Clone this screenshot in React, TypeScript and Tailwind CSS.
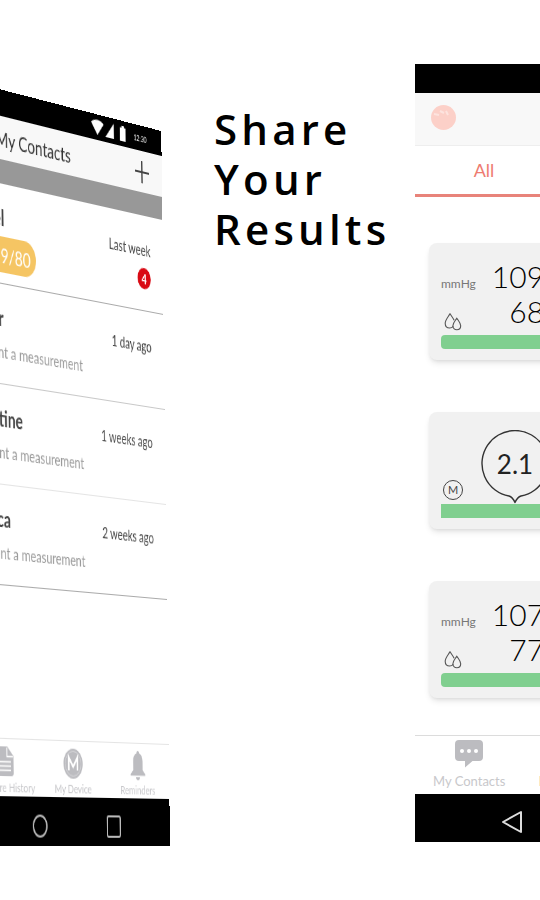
import type { ReactNode } from "react";
import clsx from "clsx";

interface Contact {
  name: string;
  time: string;
  reading?: string;
  unread?: number;
}

const contacts: Contact[] = [
  { name: "Daniel", time: "Last week", reading: "119/80", unread: 4 },
  { name: "Oliver", time: "1 day ago" },
  { name: "Christine", time: "1 weeks ago" },
  { name: "Jessica", time: "2 weeks ago" },
];

function ChatIcon() {
  return (
    <svg width="28" height="28" viewBox="0 0 28 28" fill="none">
      <path
        d="M4 0h20a4 4 0 0 1 4 4v13a4 4 0 0 1-4 4h-6.500l-7.500 6.500V21H4a4 4 0 0 1-4-4V4a4 4 0 0 1 4-4z"
        fill="#bcbcc0"
      />
      <circle cx="7" cy="11" r="2" fill="#fff" />
      <circle cx="14" cy="11" r="2" fill="#fff" />
      <circle cx="21" cy="11" r="2" fill="#fff" />
    </svg>
  );
}

function HistoryIcon({ color }: { color: string }) {
  return (
    <svg width="24" height="28" viewBox="0 0 24 28" fill="none">
      <path d="M3 0h12l9 9v16a3 3 0 0 1-3 3H3a3 3 0 0 1-3-3V3a3 3 0 0 1 3-3z" fill={color} />
      <path d="M14.500 1v8.500H23M4 14.500h16M4 18.500h16M4 22.500h16" stroke="#fff" strokeWidth="1.500" />
    </svg>
  );
}

function DeviceIcon() {
  return (
    <svg width="29" height="29" viewBox="0 0 29 29" fill="none">
      <circle cx="14.500" cy="14.500" r="14.500" fill="#bcbcc0" />
      <circle cx="14.500" cy="14.500" r="12" stroke="#d6d6d9" strokeWidth="1" />
      <path d="M8 21V8.500l6.500 9 6.500-9V21" stroke="#fff" strokeWidth="2.400" />
    </svg>
  );
}

function BellIcon() {
  return (
    <svg width="24" height="29" viewBox="0 0 24 29" fill="#bcbcc0">
      <path d="M12 0c1.200 0 2 1 2 2.200 3.600 1.100 5.500 4 5.500 8V19l4 4v1.500H.5V23l4-4v-8.800c0-4 1.900-6.900 5.500-8C10 1 10.800 0 12 0z" />
      <path d="M9 26h6a3 3 0 0 1-6 0z" />
    </svg>
  );
}

function DropsIcon() {
  return (
    <svg width="18" height="18" viewBox="0 0 18 18" fill="none" stroke="#555" strokeWidth="1.100">
      <path d="M9.200 13.200C8.400 14.400 7.300 15 5.700 15 3 15 1.200 13 1.200 10.200 1.200 7 3.700 4.500 6 .8c1.600 2.400 3.200 4.300 4.100 6.500" />
      <path d="M12.800 5.200c1.700 2.700 3.900 4.700 3.900 7.500 0 2.200-1.600 4-3.900 4s-3.900-1.800-3.900-4c0-2.800 2.200-4.800 3.900-7.500z" />
    </svg>
  );
}

interface NavTabProps {
  icon: ReactNode;
  label: string;
  active?: boolean;
}

function NavTab({ icon, label, active }: NavTabProps) {
  return (
    <button
      className={clsx(
        "flex flex-col items-center whitespace-nowrap",
        active ? "text-[#ee7b70]" : "text-[#c8c8cb]"
      )}
    >
      <span className="flex h-[30px] items-center">{icon}</span>
      {label}
    </button>
  );
}

function SystemBar({ className }: { className: string }) {
  return (
    <div className={clsx("flex items-center justify-between bg-black pt-2", className)}>
      <button aria-label="Back">
        <svg width="22" height="24" viewBox="0 0 22 24" fill="none" stroke="#ddd" strokeWidth="2">
          <path d="M20 2v20L2 12z" strokeLinejoin="round" />
        </svg>
      </button>
      <button aria-label="Home">
        <svg width="22" height="22" viewBox="0 0 22 22" fill="none" stroke="#bbb" strokeWidth="2">
          <circle cx="11" cy="11" r="10" />
        </svg>
      </button>
      <button aria-label="Recent apps">
        <svg width="22" height="22" viewBox="0 0 22 22" fill="none" stroke="#bbb" strokeWidth="2">
          <rect x="1" y="1" width="20" height="20" rx="2" />
        </svg>
      </button>
    </div>
  );
}

function ContactRow({ name, time, reading, unread }: Contact) {
  return (
    <li className="flex h-[95px] items-start justify-between border-b border-[#aaa] pt-5 pr-5 pl-[110px] nth-2:border-[#c8c8c8] nth-3:border-[#e4e4e4]">
      <div>
        <p className="text-xl/6 font-bold text-[#444]">{name}</p>
        {reading ? (
          <p className="mt-1.5 ml-5 flex h-[34px] items-center rounded-full bg-[#f5c563] px-2 text-xl text-white">
            {reading}
          </p>
        ) : (
          <p className="mt-2 text-base/6 text-[#999]">You sent a measurement</p>
        )}
      </div>
      <div className="flex flex-col items-end gap-1">
        <p className="text-[15px]/7 text-[#444]">{time}</p>
        {unread && (
          <span className="flex size-[21px] items-center justify-center rounded-full bg-[#d90a14] text-sm font-bold text-white">
            {unread}
          </span>
        )}
      </div>
    </li>
  );
}

// Phone turned away from the viewer, hinged on its bottom right corner
function ContactsPhone() {
  return (
    <section className="mt-[131px] flex h-[715px] w-[410px] shrink-0 origin-bottom-right flex-col bg-white [transform:skewX(0.7deg)_perspective(3530px)_rotateY(52deg)]">
      <div className="flex h-[25px] items-center justify-end gap-2 bg-black pr-6 text-[8px] text-white">
        <svg width="58" height="15" viewBox="0 0 66 17" fill="#fff">
          <path d="M0 4C6-1 16-1 22 4L11 17z" />
          <path d="M40 0v17H25z" />
          <path d="M51 2h3V0h4v2h3v15H51z" />
        </svg>
        12:30
      </div>
      <header className="flex h-[41px] items-center justify-between bg-[#f8f8f8] pr-[21px]">
        <h2 className="flex-1 pl-14 text-center text-xl text-[#333]">My Contacts</h2>
        <button aria-label="Add contact">
          <svg width="22" height="22" viewBox="0 0 22 22" stroke="#444" strokeWidth="2">
            <path d="M11 0v22M0 11h22" />
          </svg>
        </button>
      </header>
      <div className="h-[23px] bg-[#989898]" />
      <ul>
        {contacts.map((contact) => (
          <ContactRow key={contact.name} {...contact} />
        ))}
      </ul>
      <nav className="mt-auto grid h-[55px] grid-cols-4 border-t border-[#e4e4e4] pt-1.5 pl-2 text-xs/5">
        <NavTab icon={<ChatIcon />} label="My Contacts" />
        <NavTab icon={<HistoryIcon color="#bcbcc0" />} label="Measure History" />
        <NavTab icon={<DeviceIcon />} label="My Device" />
        <NavTab icon={<BellIcon />} label="Reminders" />
      </nav>
      <SystemBar className="h-[47px] pr-[78px] pl-[86px]" />
    </section>
  );
}

function Card({ children, square }: { children: ReactNode; square?: boolean }) {
  return (
    <article className="flex h-[117px] flex-col justify-end rounded-lg bg-[#f1f1f1] px-3 pb-[11px] shadow-md">
      {children}
      <div className={clsx("h-3.5 shrink-0 bg-[#80cf8f]", !square && "rounded-sm")} />
    </article>
  );
}

function PressureCard({ systolic, diastolic }: { systolic: number; diastolic: number }) {
  return (
    <Card>
      <div className="flex gap-4 pb-1">
        <div className="flex flex-col justify-between pt-[17px] text-xs text-[#777]">
          mmHg
          <span className="pl-[3px]">
            <DropsIcon />
          </span>
        </div>
        <div className="pb-0.5 text-right text-[30px]/[35px] font-light text-black">
          <p>{systolic}</p>
          <p>{diastolic}</p>
        </div>
      </div>
    </Card>
  );
}

function RatioCard({ value }: { value: string }) {
  return (
    <Card square>
      <div className="flex items-end gap-[18px] pl-0.5">
        <span className="mb-1 flex size-5 items-center justify-center rounded-full border border-[#444] text-[11px] text-[#444]">
          M
        </span>
        <div className="relative">
          <svg width="68" height="74" viewBox="0 0 68 74" fill="none" stroke="#333" strokeWidth="1.400">
            <path d="M28 66A33 33 0 1 1 40 66Q36.500 67 34 72.500 31.500 67 28 66z" strokeLinejoin="round" />
          </svg>
          <p className="absolute inset-x-0 top-4 text-center text-[26px]/9 text-[#222]">{value}</p>
        </div>
      </div>
    </Card>
  );
}

function HistoryPhone() {
  return (
    <section className="mt-16 flex h-[778px] w-[424px] shrink-0 flex-col bg-white">
      <div className="h-[29px] bg-black" />
      <header className="flex h-[53px] items-center border-b border-[#eee] bg-[#f8f8f8] pb-1 pl-4">
        <button aria-label="Profile">
          <svg width="25" height="25" viewBox="0 0 25 25" fill="none">
            <circle cx="12.500" cy="12.500" r="12.500" fill="#fcd0c8" />
            <path d="M3 9l5 1M9 6l4 2M15 6l2 4" stroke="#fde3de" strokeWidth="2" />
          </svg>
        </button>
      </header>
      <div role="tablist" className="flex h-[51px]">
        <button role="tab" aria-selected className="w-[138px] border-b-3 border-[#e8837a] text-lg text-[#ee7b70]">
          All
        </button>
      </div>
      <div className="flex flex-col gap-[52px] px-3.5 pt-[46px]">
        <PressureCard systolic={109} diastolic={68} />
        <RatioCard value="2.1" />
        <PressureCard systolic={107} diastolic={77} />
      </div>
      <nav className="mt-auto flex h-[59px] justify-between border-t border-[#dcdcdc] px-[18px] pt-[3px] text-[13px]/6">
        <NavTab icon={<ChatIcon />} label="My Contacts" />
        <NavTab icon={<HistoryIcon color="#ee7b70" />} label="Measure History" active />
        <NavTab icon={<DeviceIcon />} label="My Device" />
        <NavTab icon={<BellIcon />} label="Reminders" />
      </nav>
      <SystemBar className="h-12 px-[86px]" />
    </section>
  );
}

export default function App() {
  return (
    <main className="flex min-h-screen items-start overflow-hidden bg-white font-[Lato,sans-serif]">
      <div className="flex w-[170px] shrink-0 justify-end">
        <ContactsPhone />
      </div>
      <h1 className="mt-[104px] flex-1 pl-11 font-['Open_Sans',sans-serif] text-[42px]/[50px] font-semibold tracking-widest text-black">
        Share
        <br />
        Your
        <br />
        Results
      </h1>
      <div className="flex w-[125px] shrink-0">
        <HistoryPhone />
      </div>
    </main>
  );
}
